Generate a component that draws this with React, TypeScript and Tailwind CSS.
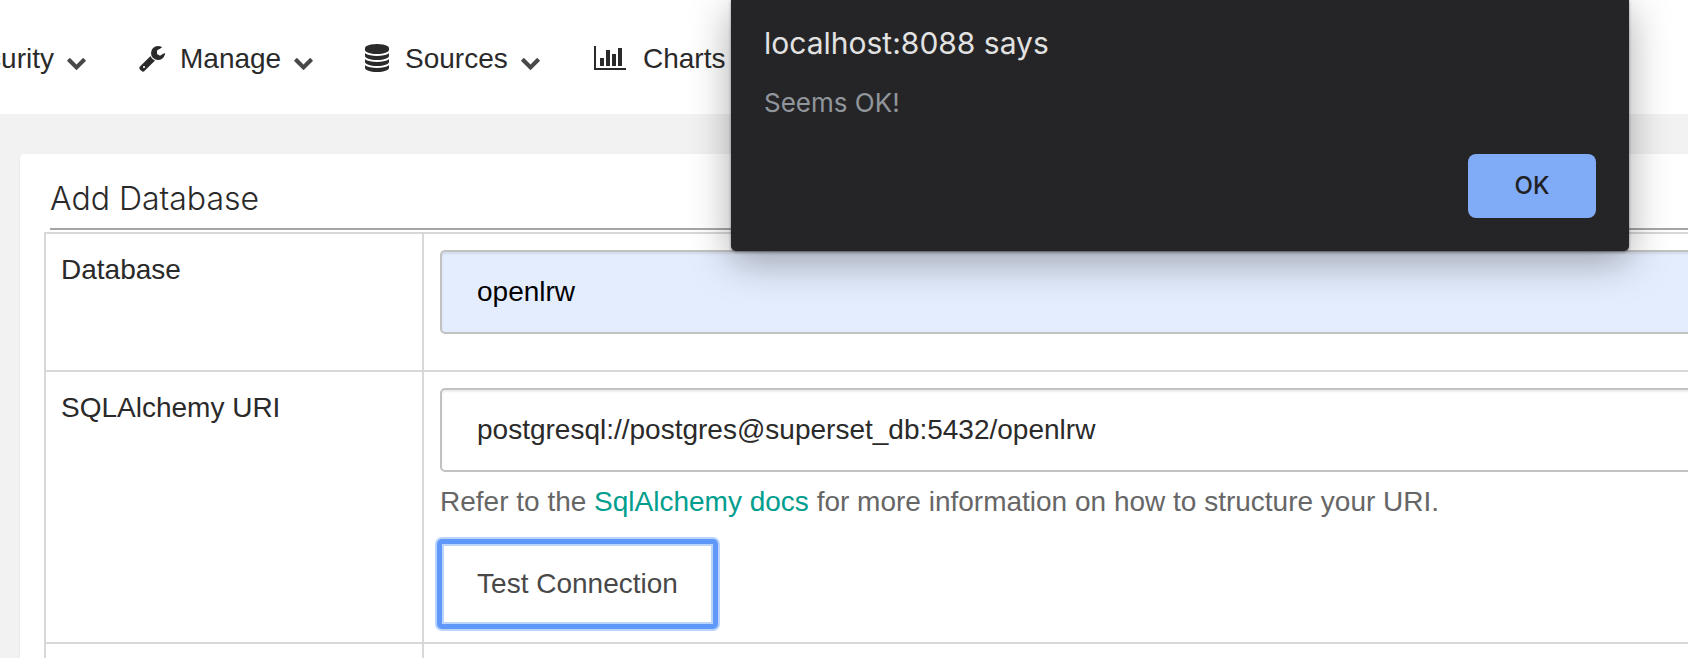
import React from "react";

const WRENCH =
  "M448 1472q0-26-19-45t-45-19-45 19-19 45 19 45 45 19 45-19 19-45zm644-420l-682 682q-37 37-90 37-52 0-91-37l-106-108q-38-36-38-90 0-53 38-91l681-681q39 98 114.5 173.5t173.5 114.5zm634-435q0 39-23 106-47 134-164.500 217.500t-258.500 83.500q-185 0-316.500-131.500t-131.500-316.500 131.500-316.500 316.500-131.500q58 0 121.500 16.500t107.500 46.500q16 11 16 28t-16 28l-293 169v224l193 107q5-3 79-48.500t135.500-81 70.500-35.500q15 0 23.500 10t8.500 25z";
const DATABASE =
  "M896 768q237 0 443-43t325-127v170q0 69-103 128t-280 93.5-385 34.5-385-34.5-280-93.5-103-128v-170q119 84 325 127t443 43zm0 768q237 0 443-43t325-127v170q0 69-103 128t-280 93.5-385 34.5-385-34.5-280-93.5-103-128v-170q119 84 325 127t443 43zm0-384q237 0 443-43t325-127v170q0 69-103 128t-280 93.5-385 34.5-385-34.5-280-93.5-103-128v-170q119 84 325 127t443 43zm0-1152q208 0 385 34.5t280 93.5 103 128v128q0 69-103 128t-280 93.5-385 34.5-385-34.5-280-93.5-103-128v-128q0-69 103-128t280-93.5 385-34.5z";
const BAR_CHART =
  "M640 896v512h-256v-512h256zm384-512v1024h-256v-1024h256zm1024 1152v128h-2048v-1536h128v1408h1920zm-640-896v768h-256v-768h256zm384-384v1152h-256v-1152h256z";
const CHEVRON =
  "M1683 808l-742 741q-19 19-45 19t-45-19l-742-741q-19-19-19-45.500t19-45.500l166-165q19-19 45-19t45 19l531 531 531-531q19-19 45-19t45 19l166 165q19 19 19 45.500t-19 45.500z";

function Icon({ d, box, className }: { d: string; box: string; className: string }) {
  return (
    <svg viewBox={box} className={className} fill="currentColor" aria-hidden="true">
      <path d={d} />
    </svg>
  );
}

function Caret() {
  return <Icon d={CHEVRON} box="90 533 1612 1035" className="mt-3 ml-[13px] h-3 w-[19px] shrink-0 text-[#484848]" />;
}

function Nav() {
  return (
    <nav className="flex h-[114px] items-center bg-white pt-0.5 text-[#2a2a2a]">
      <a className="flex w-[138px] shrink-0 items-center">
        <span className="flex w-[54px] shrink-0 justify-end pt-0.5">Security</span>
        <Caret />
      </a>
      <a className="flex w-[225px] shrink-0 items-center">
        <Icon d={WRENCH} box="0 0 1792 1792" className="mr-3.5 size-7 shrink-0" />
        <span className="pt-0.5">Manage</span>
        <Caret />
      </a>
      <a className="flex w-[231px] shrink-0 items-center">
        <Icon d={DATABASE} box="0 0 1792 1792" className="mr-3.5 size-7 shrink-0" />
        <span className="pt-0.5">Sources</span>
        <Caret />
      </a>
      <a className="flex shrink-0 items-center">
        <Icon d={BAR_CHART} box="0 0 2048 1792" className="mr-[17px] h-7 w-8 shrink-0" />
        <span className="pt-0.5">Charts</span>
      </a>
    </nav>
  );
}

function Row({ label, height, children }: { label: string; height: string; children?: React.ReactNode }) {
  return (
    <div className={`flex border-t-2 border-l-2 border-[#d8d8d8] ${height}`}>
      <div className="w-[376px] shrink-0 pt-4 pl-[15px]">{label}</div>
      <div className="min-w-0 grow border-l-2 border-[#d8d8d8] pt-4 pl-4">{children}</div>
    </div>
  );
}

const FIELD =
  "flex h-[84px] w-[1300px] items-center rounded-[5px] border-2 border-[#c2c2c2] pl-[35px] shadow-[inset_0_2px_2px_rgba(0,0,0,0.08)]";

function Dialog() {
  return (
    <div
      role="alertdialog"
      className="absolute top-0 left-[731px] flex h-[251px] w-[898px] flex-col rounded-b-[5px] bg-[#252527] pt-[23px] pr-[33px] pl-[33px] font-['Inter',sans-serif] shadow-[0_10px_40px_rgba(0,0,0,0.34),0_1px_3px_rgba(0,0,0,0.4)]"
    >
      <div className="text-[30px] leading-10 text-[#e2e2e2]">localhost:8088 says</div>
      <div className="mt-[22px] text-[26px] leading-9 text-[#91969c]">Seems OK!</div>
      <button className="mt-[33px] h-16 w-32 self-end rounded-lg bg-[#80abf7] text-2xl font-medium text-[#202124]">OK</button>
    </div>
  );
}

export default function App() {
  return (
    <div className="relative h-[658px] w-full overflow-hidden bg-[#f2f2f2] font-['Liberation_Sans',sans-serif] text-[28px] leading-10 text-[#2a2a2a]">
      <Nav />
      <main className="mt-10 ml-5 h-[520px] rounded-tl-[4px] bg-white pl-6 shadow-[0_1px_2px_rgba(0,0,0,0.1)]">
        <div className="ml-1.5 h-[76px] border-b-2 border-[#a6a6a6] pt-[25px]">
          <h1 className="font-['Inter',sans-serif] text-[32px] font-light">Add Database</h1>
        </div>
        <div className="mt-0.5">
          <Row label="Database" height="h-[138px]">
            <div className={`${FIELD} bg-[#e4edfe] text-black`}>openlrw</div>
          </Row>
          <Row label="SQLAlchemy URI" height="h-[272px]">
            <div className={`${FIELD} bg-white`}>postgresql://postgres@superset_db:5432/openlrw</div>
            <p className="mt-2.5 text-[#666666]">
              Refer to the <a className="text-[#009e8e]">SqlAlchemy docs</a> for more information on how to structure your URI.
            </p>
            <button className="mt-[17px] ml-[-3px] flex h-[90px] w-[281px] items-center justify-center rounded-[5px] border-[5px] border-[#5f98f8] bg-white text-[#484848] shadow-[0_0_0_2px_#bad4fc,inset_0_0_0_2px_#bad4fc]">
              Test Connection
            </button>
          </Row>
          <Row label="" height="h-[80px]" />
        </div>
      </main>
      <Dialog />
    </div>
  );
}
